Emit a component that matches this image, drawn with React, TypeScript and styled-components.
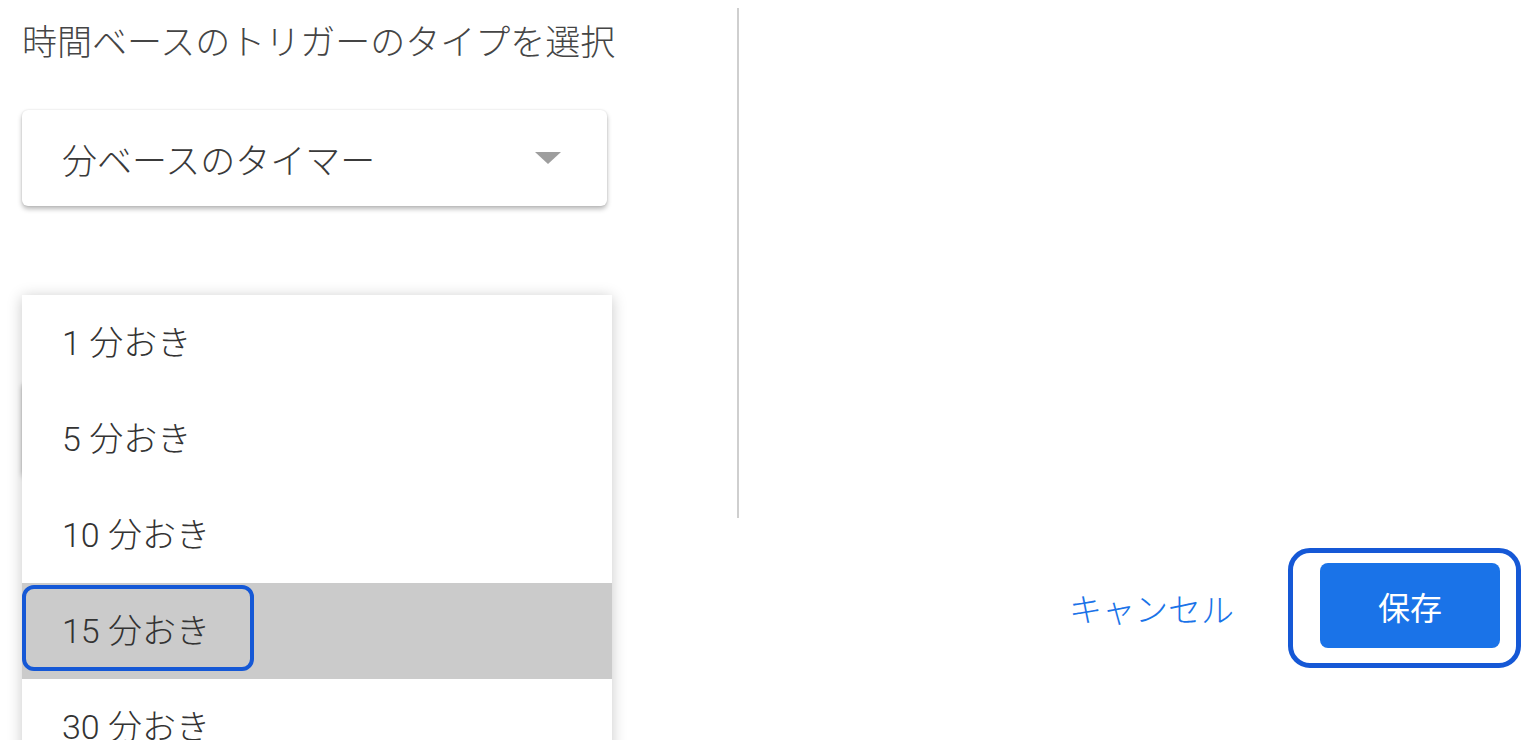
import React from "react";
import styled, { createGlobalStyle } from "styled-components";

const FONT = `Roboto, "Noto Sans CJK JP", "Noto Sans", sans-serif`;

const GlobalStyle = createGlobalStyle`
	html, body {
		margin: 0;
		padding: 0;
		background: #ffffff;
		font-family: ${FONT};
	}
`;

const intervals = ["1 分おき", "5 分おき", "10 分おき", "15 分おき", "30 分おき"];
const focusedIndex = 3;

const App = () => {
	return (
		<>
			<GlobalStyle />
			<Page>
				<LeftPanel>
					<Title>時間ベースのトリガーのタイプを選択</Title>
					<Select>
						<SelectValue>分ベースのタイマー</SelectValue>
						<Arrow />
					</Select>
					<IntervalField>
						{/* the interval select sits under its open menu */}
						<Select aria-hidden>
							<SelectValue />
							<Arrow />
						</Select>
						<Menu>
							{intervals.map((label, i) => (
								<MenuItem key={label} selected={i === focusedIndex}>
									<ItemLabel focused={i === focusedIndex}>{label}</ItemLabel>
								</MenuItem>
							))}
						</Menu>
					</IntervalField>
				</LeftPanel>
				<Divider />
				<Footer>
					<CancelButton>キャンセル</CancelButton>
					<FocusRing>
						<SaveButton>保存</SaveButton>
					</FocusRing>
				</Footer>
			</Page>
		</>
	);
};

export default App;

const Page = styled.div`
	display: grid;
	grid-template-columns: 737px 2px 1fr;
	grid-template-rows: 518px auto;
	height: 740px;
	overflow: hidden;
`;

const LeftPanel = styled.div`
	grid-column: 1;
	grid-row: 1;
	display: flex;
	flex-direction: column;
	padding: 20px 0 0 22px;
	position: relative;
	z-index: 2;
`;

const Title = styled.div`
	font-size: 35px;
	font-weight: 300;
	line-height: 48px;
	color: #454545;
	white-space: nowrap;
`;

const Select = styled.div`
	display: flex;
	align-items: center;
	justify-content: space-between;
	box-sizing: border-box;
	width: 585px;
	height: 96px;
	margin-top: 42px;
	padding: 0 46px 0 40px;
	background: #ffffff;
	border-radius: 6px;
	box-shadow: 0 3px 5px rgba(0, 0, 0, 0.28), 0 0 2px rgba(0, 0, 0, 0.12);
`;

const SelectValue = styled.span`
	font-size: 35px;
	font-weight: 300;
	color: #3a3a3a;
`;

const Arrow = styled.span`
	width: 0;
	height: 0;
	border-left: 13px solid transparent;
	border-right: 13px solid transparent;
	border-top: 12px solid #9e9e9e;
`;

const IntervalField = styled.div`
	position: relative;
	margin-top: 132px;
`;

const Menu = styled.div`
	position: absolute;
	top: -43px;
	left: 0;
	width: 590px;
	background: #ffffff;
	box-shadow: 0 2px 14px rgba(0, 0, 0, 0.22);
`;

const MenuItem = styled.div<{ selected?: boolean }>`
	display: flex;
	align-items: flex-start;
	height: 96px;
	padding-top: 2px;
	box-sizing: border-box;
	background: ${({ selected }) => (selected ? "#cbcbcb" : "#ffffff")};
`;

const ItemLabel = styled.span<{ focused?: boolean }>`
	display: inline-flex;
	align-items: center;
	box-sizing: border-box;
	height: 86px;
	padding: 0 40px 0 36px;
	border: 4px solid ${({ focused }) => (focused ? "#1558d6" : "transparent")};
	border-radius: 12px;
	font-size: 34px;
	font-weight: 300;
	color: #333333;
	white-space: nowrap;
`;

const Divider = styled.div`
	grid-column: 2;
	grid-row: 1;
	margin-top: 8px;
	background: #cfcfcf;
`;

const Footer = styled.div`
	grid-column: 1 / -1;
	grid-row: 2;
	align-self: start;
	display: flex;
	align-items: center;
	justify-content: flex-end;
	gap: 54px;
	margin-top: 30px;
	padding-right: 15px;
`;

const CancelButton = styled.button`
	border: none;
	background: none;
	padding: 0;
	font-family: ${FONT};
	font-size: 33px;
	font-weight: 300;
	color: #1a73e8;
	cursor: pointer;
`;

const FocusRing = styled.div`
	border: 5px solid #1558d6;
	border-radius: 22px;
	padding: 10px 16px 15px 27px;
`;

const SaveButton = styled.button`
	display: flex;
	align-items: center;
	justify-content: center;
	width: 180px;
	height: 85px;
	border: none;
	border-radius: 8px;
	background: #1a73e8;
	color: #ffffff;
	font-family: ${FONT};
	font-size: 32px;
	font-weight: 400;
	cursor: pointer;
`;
